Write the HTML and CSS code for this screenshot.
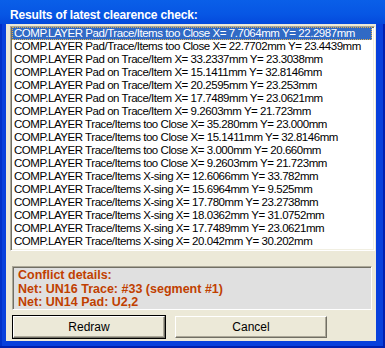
FILE: index.html
```html
<!DOCTYPE html>
<html lang="en">
<head>
    <meta charset="UTF-8">
    <title>Clearance check</title>
    <link rel="stylesheet" href="styles.css">
</head>
<body>
    <div class="window">
        <div class="caption">Results of latest clearence check:</div>
        <div class="client">
            <div class="listbox">
                <div class="row selected"><span>COMP.LAYER Pad/Trace/Items too Close X= 7.7064mm Y= 22.2987mm</span></div>
                <div class="row">COMP.LAYER Pad/Trace/Items too Close X= 22.7702mm Y= 23.4439mm</div>
                <div class="row">COMP.LAYER Pad on Trace/Item X= 33.2337mm Y= 23.3038mm</div>
                <div class="row">COMP.LAYER Pad on Trace/Item X= 15.1411mm Y= 32.8146mm</div>
                <div class="row">COMP.LAYER Pad on Trace/Item X= 20.2595mm Y= 23.253mm</div>
                <div class="row">COMP.LAYER Pad on Trace/Item X= 17.7489mm Y= 23.0621mm</div>
                <div class="row">COMP.LAYER Pad on Trace/Item X= 9.2603mm Y= 21.723mm</div>
                <div class="row">COMP.LAYER Trace/Items too Close X= 35.280mm Y= 23.000mm</div>
                <div class="row">COMP.LAYER Trace/Items too Close X= 15.1411mm Y= 32.8146mm</div>
                <div class="row">COMP.LAYER Trace/Items too Close X= 3.000mm Y= 20.660mm</div>
                <div class="row">COMP.LAYER Trace/Items too Close X= 9.2603mm Y= 21.723mm</div>
                <div class="row">COMP.LAYER Trace/Items X-sing X= 12.6066mm Y= 33.782mm</div>
                <div class="row">COMP.LAYER Trace/Items X-sing X= 15.6964mm Y= 9.525mm</div>
                <div class="row">COMP.LAYER Trace/Items X-sing X= 17.780mm Y= 23.2738mm</div>
                <div class="row">COMP.LAYER Trace/Items X-sing X= 18.0362mm Y= 31.0752mm</div>
                <div class="row">COMP.LAYER Trace/Items X-sing X= 17.7489mm Y= 23.0621mm</div>
                <div class="row">COMP.LAYER Trace/Items X-sing X= 20.042mm Y= 30.202mm</div>
            </div>

            <div class="details">
                <p>Conflict details:</p>
                <p>Net: UN16 Trace: #33 (segment #1)</p>
                <p>Net: UN14 Pad: U2,2</p>
            </div>

            <div class="buttons">
                <button class="btn default">Redraw</button>
                <button class="btn">Cancel</button>
            </div>
        </div>
    </div>
</body>
</html>
```

FILE: styles.css
```css
body {
    margin: 0;
    padding: 0;
}

.window {
    width: 385px;
    height: 348px;
    display: flex;
    flex-direction: column;
    background: #0840dc;
    box-shadow: inset -2px -2px 0 #0020b0, inset 2px 0 0 #0030c8;
    box-sizing: border-box;
}

/* Title bar */
.caption {
    height: 24px;
    box-sizing: border-box;
    flex-shrink: 0;
    padding: 7px 0 0 10px;
    background: linear-gradient(180deg, #0a5fe8 0%, #0756e4 60%, #0449dc 100%);
    color: #fff;
    font-family: "Liberation Sans", Arial, sans-serif;
    font-weight: bold;
    font-size: 12px;
    letter-spacing: -0.15px;
    line-height: 17px;
    white-space: nowrap;
}

.client {
    flex: 1;
    margin: 0 9px 7px 6px;
    padding: 2px 1px 0 4px;
    background: #ece9d8;
    display: flex;
    flex-direction: column;
    font-family: "Liberation Sans", Arial, sans-serif;
    font-size: 12px;
}

/* List box */
.listbox {
    flex-shrink: 0;
    box-sizing: border-box;
    height: 225px;
    background: #fff;
    border-top: 1px solid #aca899;
    border-left: 1px solid #aca899;
    border-right: 1px solid #fff;
    border-bottom: 1px solid #fff;
    box-shadow: inset 1px 1px 0 #716f64, inset -1px -1px 0 #f1efe2;
    padding: 0 2px 0 1px;
    overflow: hidden;
}

.row {
    height: 13px;
    line-height: 13px;
    padding-left: 2px;
    color: #000;
    white-space: nowrap;
    font-size: 11.5px;
    letter-spacing: -0.45px;
}

.row.selected {
    background: #316ac5;
    color: #fff;
    outline: 1px dotted #e0b050;
    outline-offset: -1px;
}

/* Conflict details */
.details {
    flex-shrink: 0;
    box-sizing: border-box;
    margin: 15px 3px 0 2px;
    height: 44px;
    padding: 2px 5px 0 5px;
    background: #e0e0e0;
    border-top: 1px solid #aca899;
    border-left: 1px solid #aca899;
    border-right: 1px solid #fff;
    border-bottom: 1px solid #fff;
    box-shadow: inset 1px 1px 0 #716f64;
    color: #c04000;
    font-weight: bold;
    font-size: 12.5px;
}

.details p {
    margin: 0;
    line-height: 13.5px;
}

/* Buttons */
.buttons {
    display: flex;
    gap: 10px;
    margin: 6px 0 0 3px;
}

.btn {
    width: 152px;
    height: 22px;
    padding: 0;
    background: #ece9d8;
    border-top: 1px solid #fff;
    border-left: 1px solid #fff;
    border-right: 1px solid #716f64;
    border-bottom: 1px solid #716f64;
    box-shadow: inset -1px -1px 0 #aca899;
    font-family: "Liberation Sans", Arial, sans-serif;
    font-size: 12px;
    color: #000;
}

.btn.default {
    outline: 1px solid #000;
}
```
